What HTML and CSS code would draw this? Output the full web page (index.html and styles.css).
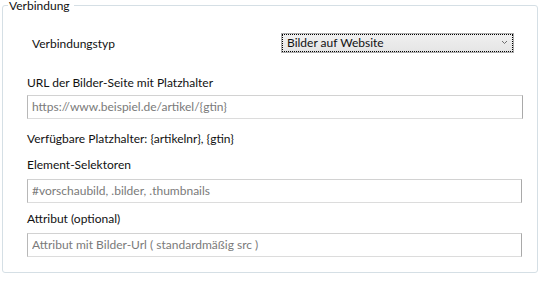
FILE: index.html
```html
<!DOCTYPE html>
<html lang="de">
<head>
<meta charset="utf-8">
<title>Verbindung</title>
<link rel="stylesheet" href="styles.css">
</head>
<body>
<fieldset class="group">
  <legend class="group-title">Verbindung</legend>
  <div class="group-body">
    <div class="type-row">
      <span class="type-label">Verbindungstyp</span>
      <div class="combo">
        <div class="combo-focus">
          <span class="combo-text">Bilder auf Website</span>
          <svg class="chevron" width="7" height="5" viewBox="0 0 7 5"><polyline points="1,1 3.5,3.5 6,1" fill="none" stroke="#6f6f6f" stroke-width="1"/></svg>
        </div>
      </div>
    </div>
    <div class="label label-url">URL der Bilder-Seite mit Platzhalter</div>
    <input class="field field-wide" type="text" placeholder="https://www.beispiel.de/artikel/{gtin}">
    <div class="label label-hint">Verfügbare Platzhalter: {artikelnr}, {gtin}</div>
    <div class="label label-sel">Element-Selektoren</div>
    <input class="field" type="text" placeholder="#vorschaubild, .bilder, .thumbnails">
    <div class="label label-attr">Attribut (optional)</div>
    <input class="field" type="text" placeholder="Attribut mit Bilder-Url ( standardmäßig src )">
  </div>
</fieldset>
</body>
</html>
```
FILE: styles.css
```css
html, body {
  margin: 0;
  padding: 0;
  background: #ffffff;
}
body {
  font-family: Lato, "Noto Sans", sans-serif;
  font-size: 12px;
  color: #111111;
}
.group {
  box-sizing: border-box;
  width: 536px;
  margin: 0 0 0 2px;
  padding: 0;
  border: 1px solid #d5dfe5;
  border-radius: 3px;
}
.group-title {
  margin-left: 5px;
  padding: 0 4px 0 1px;
  line-height: 11px;
  font-size: 12px;
  color: #111111;
}
.group-body {
  display: flex;
  flex-direction: column;
  align-items: flex-start;
  padding: 22px 14px 15px 24px;
}
.type-row {
  display: grid;
  grid-template-columns: 254px 233px;
  align-items: start;
}
.type-label {
  padding-left: 5px;
  margin-top: 3px;
  line-height: 16px;
}
.combo {
  box-sizing: border-box;
  height: 20px;
  border: 1px solid #acacac;
  background: linear-gradient(#f0f0f0, #e5e5e5);
  padding: 0;
}
.combo-focus {
  box-sizing: border-box;
  height: 18px;
  border: 1px dotted #000000;
  display: flex;
  align-items: center;
  justify-content: space-between;
  padding: 0 4px 0 4px;
}
.combo-text {
  line-height: 16px;
  color: #111111;
}
.chevron {
  display: block;
  margin-bottom: 2px;
}
.label {
  line-height: 16px;
}
.label-url { margin-top: 22px; }
.label-hint { margin-top: 12px; }
.label-sel { margin-top: 10px; }
.label-attr { margin-top: 8px; }
.field {
  box-sizing: border-box;
  width: 495px;
  height: 24px;
  margin: 6px 0 0 0;
  padding: 0 4px 1px 4px;
  border: 1px solid;
  border-color: #d2d2d2 #a9a9a9 #dcdcdc #b8b8b8;
  border-radius: 0;
  font-family: inherit;
  font-size: 12px;
  color: #111111;
  background: #ffffff;
  outline: none;
}
.field-wide {
  width: 496px;
  margin-top: 4px;
}
.field::placeholder {
  color: #7a7a7a;
  opacity: 1;
}
```
